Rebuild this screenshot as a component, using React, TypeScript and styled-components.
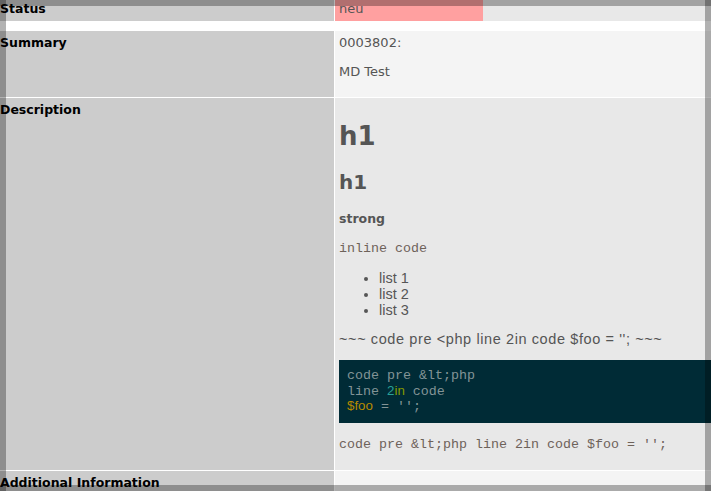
import styled, { createGlobalStyle } from "styled-components";

const GlobalStyle = createGlobalStyle`
    html, body {
        margin: 0;
        padding: 0;
        background: #fff;
        overflow: hidden;
    }
    body {
        font-family: "DejaVu Sans", Verdana, sans-serif;
        font-size: 13px;
        line-height: 16px;
    }
`

const Details = styled.div`
    width: 724px;
    margin-top: -3px;
    background: #fff;
`

const Row = styled.div<{ $spaced?: boolean }>`
    display: grid;
    grid-template-columns: 334px 1fr;
    column-gap: 1px;
    margin-top: ${p => (p.$spaced ? "10px" : "1px")};

    &:first-child {
        margin-top: 0;
    }
`

const Label = styled.div`
    background: #cccccc;
    color: #000;
    font-weight: bold;
    font-size: 12.5px;
    padding: 4px 0;
`

const Value = styled.div<{ $tone?: "light" | "mid" }>`
    background: ${p => (p.$tone === "light" ? "#f4f4f4" : "#e8e8e8")};
    color: #555;
    padding: 4px;
`

const StatusValue = styled.div`
    display: flex;
    background: #e8e8e8;
`

const StatusBadge = styled.div`
    width: 148px;
    background: #ffa0a0;
    color: #555;
    padding: 4px;
    box-sizing: border-box;
`

const Para = styled.p`
    margin: 13px 0;
`

const Heading = styled.div<{ $size: number }>`
    font-weight: bold;
    color: #555;
    font-size: ${p => p.$size}px;
    line-height: ${p => p.$size + 4}px;
    margin: 19px 0 17px;
`

const Strong = styled.p`
    font-weight: bold;
    font-size: 12.5px;
    margin: 12px 0 13px;
`

const Code = styled.code`
    font-family: "Liberation Mono", "Courier New", monospace;
    font-size: 13.33px;
    color: #6e625a;
`

const List = styled.ul`
    font-family: "Liberation Sans", Arial, sans-serif;
    font-size: 14.5px;
    margin: 11px 0 13px;
    padding-left: 40px;
`

const Plain = styled.p`
    font-family: "Liberation Sans", Arial, sans-serif;
    font-size: 14.5px;
    letter-spacing: 0.6px;
    margin: 13px 0;
`

const Pre = styled.pre`
    background: #002b36;
    color: #839496;
    font-family: "Liberation Mono", "Courier New", monospace;
    font-size: 13.33px;
    line-height: 15.5px;
    padding: 8px;
    margin: 13px 0 12px;
`

const Token = styled.span<{ $color: string }>`
    color: ${p => p.$color};
    font-family: "Liberation Sans", Arial, sans-serif;
    line-height: 10px;
`

const Shade = styled.div<{ $side: "top" | "bottom" | "left" | "right" }>`
    position: fixed;
    background: rgba(0, 0, 0, 0.3);
    pointer-events: none;
    ${p =>
        p.$side === "top" || p.$side === "bottom"
            ? `left: 0; right: 0; height: 6px; ${p.$side}: 0;`
            : `top: 0; bottom: 0; width: 6px; ${p.$side}: 0;`}
`

export const App = () => {
    return (
        <>
            <GlobalStyle />
            <Details>
                <Row>
                    <Label>Status</Label>
                    <StatusValue>
                        <StatusBadge>neu</StatusBadge>
                    </StatusValue>
                </Row>
                <Row $spaced>
                    <Label>Summary</Label>
                    <Value $tone="light">
                        0003802:
                        <Para>MD Test</Para>
                    </Value>
                </Row>
                <Row>
                    <Label>Description</Label>
                    <Value>
                        <Heading $size={26}>h1</Heading>
                        <Heading $size={20}>h1</Heading>
                        <Strong>strong</Strong>
                        <Para>
                            <Code>inline code</Code>
                        </Para>
                        <List>
                            <li>list 1</li>
                            <li>list 2</li>
                            <li>list 3</li>
                        </List>
                        <Plain>~~~ code pre &lt;php line 2in code $foo = ''; ~~~</Plain>
                        <Pre>
                            {"code pre &lt;php\nline "}
                            <Token $color="#2aa198">2</Token>
                            <Token $color="#859900">in</Token>
                            {" code\n"}
                            <Token $color="#b58900">$foo</Token>
                            {" = '';"}
                        </Pre>
                        <Para>
                            <Code>code pre &amp;lt;php line 2in code $foo = '';</Code>
                        </Para>
                    </Value>
                </Row>
                <Row>
                    <Label>Additional Information</Label>
                    <Value $tone="light">&nbsp;</Value>
                </Row>
            </Details>
            <Shade $side="top" />
            <Shade $side="bottom" />
            <Shade $side="left" />
            <Shade $side="right" />
        </>
    )
}

export default App;
